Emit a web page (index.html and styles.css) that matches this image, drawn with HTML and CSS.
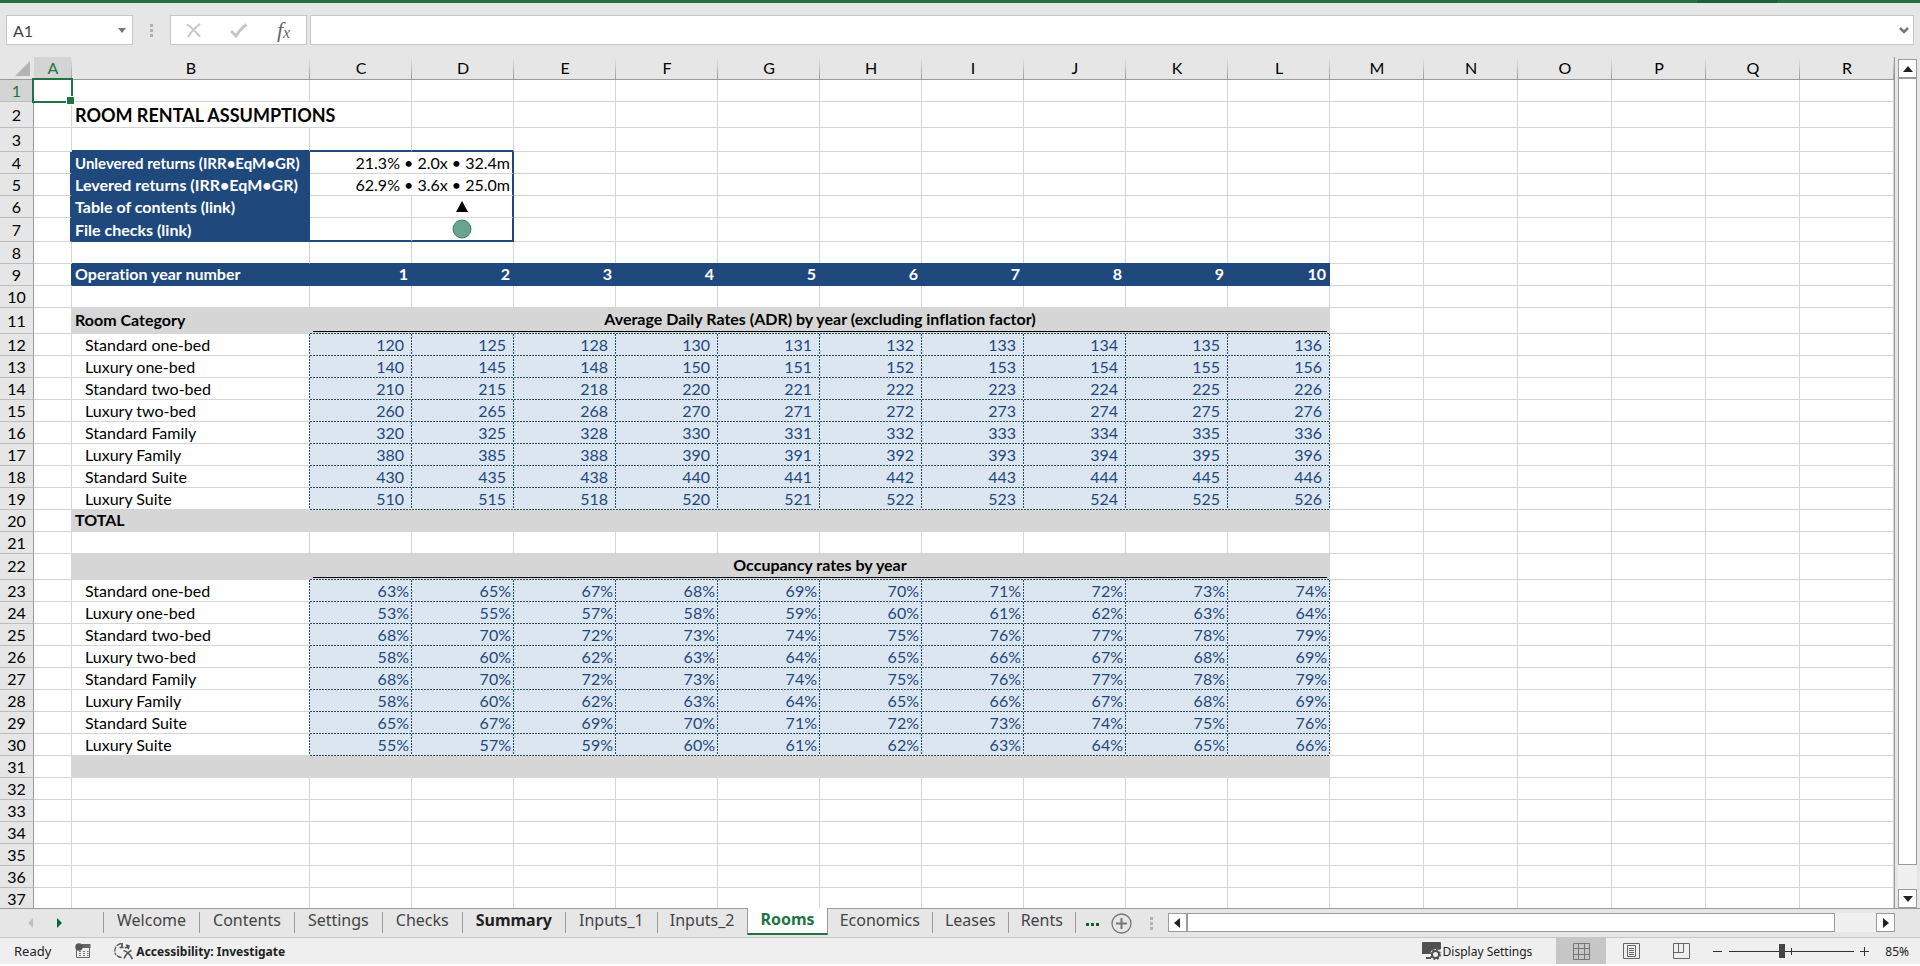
FILE: index.html
```html
<!DOCTYPE html>
<html lang="en">
<head>
<meta charset="utf-8">
<title>Rooms</title>
<link rel="stylesheet" href="styles.css">
</head>
<body>
<div class="ribbon-edge"><span class="ribbon-shade"></span></div>
<header class="formula-bar">
  <div class="name-box">
    <input class="name-input" type="text" value="A1" aria-label="Name box">
    <button class="name-drop" aria-label="Open name list"><svg width="8" height="5" viewBox="0 0 8 5"><path d="M0 0h8L4 5z" fill="#777"/></svg></button>
  </div>
  <svg class="grip" width="3" height="13" viewBox="0 0 3 13"><path d="M0 0h3v3H0zM0 5h3v3H0zM0 10h3v3H0z" fill="#b0b0b0"/></svg>
  <div class="fx-buttons">
    <button class="fx-button" aria-label="Cancel"><svg width="16" height="15" viewBox="0 0 16 15"><path d="M1 1.5Q6 4.5 14 13.5M14 1Q7 6 2 14" fill="none" stroke="#c6c6c6" stroke-width="2"/></svg></button>
    <button class="fx-button" aria-label="Enter"><svg width="18" height="15" viewBox="0 0 18 15"><path d="M1 8l5 5Q11 5 16.500 1.500" fill="none" stroke="#c6c6c6" stroke-width="3"/></svg></button>
    <button class="fx-button fx" aria-label="Insert function"><i>f</i><i class="fx-x">x</i></button>
  </div>
  <div class="formula-box">
    <input class="formula-input" type="text" value="" aria-label="Formula">
    <button class="expand" aria-label="Expand formula bar"><svg width="10" height="7" viewBox="0 0 10 7"><path d="M1 1l4 4 4-4" fill="none" stroke="#777" stroke-width="2.500"/></svg></button>
  </div>
</header>

<main class="sheet-area">
<div class="sheet">
<table class="grid">
<colgroup><col class="w-num"><col class="w-a"><col class="w-b"><col class="w-year" span="10"><col class="w-rest" span="6"></colgroup>
<thead>
<tr><th class="corner"><svg width="15" height="15" viewBox="0 0 15 15"><path d="M15 0v15H0z" fill="#b4b4b4"/></svg><th class="on">A<th>B<th>C<th>D<th>E<th>F<th>G<th>H<th>I<th>J<th>K<th>L<th>M<th>N<th>O<th>P<th>Q<th>R</tr>
</thead>
<tbody>
<tr><th class="on">1<td class="active"><span class="cursor"></span><td><td class="years" colspan="10"><td class="rest" colspan="6"></tr>
<tr class="tall"><th>2<td><td class="title" colspan="2">ROOM RENTAL ASSUMPTIONS<td class="years" colspan="9"><td class="rest" colspan="6"></tr>
<tr class="mid"><th>3<td><td class="box-top"><td class="box-top"><td class="box-top"><td class="years" colspan="8"><td class="rest" colspan="6"></tr>
<tr><th>4<td class="box-left"><td class="navy shrink">Unlevered returns (IRR•EqM•GR)<td class="box-right num" colspan="2">21.3% • 2.0x • 32.4m<td class="years" colspan="8"><td class="rest" colspan="6"></tr>
<tr><th>5<td class="box-left"><td class="navy">Levered returns (IRR•EqM•GR)<td class="box-right num" colspan="2">62.9% • 3.6x • 25.0m<td class="years" colspan="8"><td class="rest" colspan="6"></tr>
<tr><th>6<td class="box-left"><td class="navy">Table of contents (link)<td><td class="box-right mark"><svg width="12" height="11" viewBox="0 0 12 11"><path d="M6 0l6 11H0z" fill="#000"/></svg><td class="years" colspan="8"><td class="rest" colspan="6"></tr>
<tr class="mid"><th>7<td class="box-left"><td class="navy">File checks (link)<td class="box-bottom"><td class="box-right box-bottom mark"><svg width="20" height="20" viewBox="0 0 20 20"><circle cx="10" cy="10" r="9" fill="#68a490" stroke="#3f7a66"/></svg><td class="years" colspan="8"><td class="rest" colspan="6"></tr>
<tr><th>8<td><td class="band-top"><td class="years band-top" colspan="10"><td class="rest" colspan="6"></tr>
<tr class="year-row"><th>9<td class="edge"><td class="navy">Operation year number<td class="navy num">1<td class="navy num">2<td class="navy num">3<td class="navy num">4<td class="navy num">5<td class="navy num">6<td class="navy num">7<td class="navy num">8<td class="navy num">9<td class="navy num">10<td class="rest" colspan="6"></tr>
<tr><th>10<td><td><td class="years" colspan="10"><td class="rest" colspan="6"></tr>
<tr class="tall"><th>11<td><td class="grey">Room Category<td class="grey group" colspan="10"><span class="group-name">Average Daily Rates (ADR) by year (excluding inflation factor)</span><td class="rest" colspan="6"></tr>
</tbody>
<tbody class="inputs rates">
<tr><th>12<td><td>Standard one-bed<td>120<td>125<td>128<td>130<td>131<td>132<td>133<td>134<td>135<td>136<td class="rest" colspan="6"></tr>
<tr><th>13<td><td>Luxury one-bed<td>140<td>145<td>148<td>150<td>151<td>152<td>153<td>154<td>155<td>156<td class="rest" colspan="6"></tr>
<tr><th>14<td><td>Standard two-bed<td>210<td>215<td>218<td>220<td>221<td>222<td>223<td>224<td>225<td>226<td class="rest" colspan="6"></tr>
<tr><th>15<td><td>Luxury two-bed<td>260<td>265<td>268<td>270<td>271<td>272<td>273<td>274<td>275<td>276<td class="rest" colspan="6"></tr>
<tr><th>16<td><td>Standard Family<td>320<td>325<td>328<td>330<td>331<td>332<td>333<td>334<td>335<td>336<td class="rest" colspan="6"></tr>
<tr><th>17<td><td>Luxury Family<td>380<td>385<td>388<td>390<td>391<td>392<td>393<td>394<td>395<td>396<td class="rest" colspan="6"></tr>
<tr><th>18<td><td>Standard Suite<td>430<td>435<td>438<td>440<td>441<td>442<td>443<td>444<td>445<td>446<td class="rest" colspan="6"></tr>
<tr><th>19<td><td>Luxury Suite<td>510<td>515<td>518<td>520<td>521<td>522<td>523<td>524<td>525<td>526<td class="rest" colspan="6"></tr>
</tbody>
<tbody>
<tr><th>20<td><td class="grey" colspan="11">TOTAL<td class="rest" colspan="6"></tr>
<tr><th>21<td><td><td class="years" colspan="10"><td class="rest" colspan="6"></tr>
<tr class="tall"><th class="raised">22<td><td class="grey"><td class="grey group" colspan="10"><span class="group-name">Occupancy rates by year</span><td class="rest" colspan="6"></tr>
</tbody>
<tbody class="inputs">
<tr><th>23<td><td>Standard one-bed<td>63%<td>65%<td>67%<td>68%<td>69%<td>70%<td>71%<td>72%<td>73%<td>74%<td class="rest" colspan="6"></tr>
<tr><th>24<td><td>Luxury one-bed<td>53%<td>55%<td>57%<td>58%<td>59%<td>60%<td>61%<td>62%<td>63%<td>64%<td class="rest" colspan="6"></tr>
<tr><th>25<td><td>Standard two-bed<td>68%<td>70%<td>72%<td>73%<td>74%<td>75%<td>76%<td>77%<td>78%<td>79%<td class="rest" colspan="6"></tr>
<tr><th>26<td><td>Luxury two-bed<td>58%<td>60%<td>62%<td>63%<td>64%<td>65%<td>66%<td>67%<td>68%<td>69%<td class="rest" colspan="6"></tr>
<tr><th>27<td><td>Standard Family<td>68%<td>70%<td>72%<td>73%<td>74%<td>75%<td>76%<td>77%<td>78%<td>79%<td class="rest" colspan="6"></tr>
<tr><th>28<td><td>Luxury Family<td>58%<td>60%<td>62%<td>63%<td>64%<td>65%<td>66%<td>67%<td>68%<td>69%<td class="rest" colspan="6"></tr>
<tr><th>29<td><td>Standard Suite<td>65%<td>67%<td>69%<td>70%<td>71%<td>72%<td>73%<td>74%<td>75%<td>76%<td class="rest" colspan="6"></tr>
<tr><th>30<td><td>Luxury Suite<td>55%<td>57%<td>59%<td>60%<td>61%<td>62%<td>63%<td>64%<td>65%<td>66%<td class="rest" colspan="6"></tr>
</tbody>
<tbody>
<tr><th>31<td><td class="grey" colspan="11"><td class="rest" colspan="6"></tr>
<tr><th>32<td><td><td class="years" colspan="10"><td class="rest" colspan="6"></tr>
<tr><th>33<td><td><td class="years" colspan="10"><td class="rest" colspan="6"></tr>
<tr><th>34<td><td><td class="years" colspan="10"><td class="rest" colspan="6"></tr>
<tr><th>35<td><td><td class="years" colspan="10"><td class="rest" colspan="6"></tr>
<tr><th>36<td><td><td class="years" colspan="10"><td class="rest" colspan="6"></tr>
<tr><th>37<td><td><td class="years" colspan="10"><td class="rest" colspan="6"></tr>
</tbody>
</table>
</div>
<div class="v-scroll">
  <button class="scroll-button" aria-label="Scroll up"><svg width="10" height="6" viewBox="0 0 10 6"><path d="M5 0l5 6H0z" fill="#222"/></svg></button>
  <div class="v-track"><div class="v-thumb"></div></div>
  <button class="scroll-button" aria-label="Scroll down"><svg width="10" height="6" viewBox="0 0 10 6"><path d="M0 0h10L5 6z" fill="#222"/></svg></button>
</div>
</main>

<nav class="tab-bar" aria-label="Sheets">
  <div class="tab-arrows">
    <button class="bare" aria-label="Previous sheets"><svg width="5" height="10" viewBox="0 0 5 10"><path d="M5 0v10L0 5z" fill="#c0c0c0"/></svg></button>
    <button class="bare" aria-label="Next sheets"><svg width="5" height="10" viewBox="0 0 5 10"><path d="M0 0v10l5-5z" fill="#0a6332"/></svg></button>
  </div>
  <button class="tab">Welcome</button>
  <button class="tab">Contents</button>
  <button class="tab">Settings</button>
  <button class="tab">Checks</button>
  <button class="tab strong">Summary</button>
  <button class="tab">Inputs_1</button>
  <button class="tab before-current">Inputs_2</button>
  <button class="tab current">Rooms</button>
  <button class="tab">Economics</button>
  <button class="tab">Leases</button>
  <button class="tab">Rents</button>
  <button class="bare more" aria-label="More sheets"><svg width="13" height="3" viewBox="0 0 13 3"><path d="M0 0h3v3H0zM5 0h3v3H5zM10 0h3v3h-3z" fill="#0a6332"/></svg></button>
  <button class="bare add" aria-label="New sheet"><svg width="21" height="21" viewBox="0 0 21 21"><circle cx="10.500" cy="10.500" r="9.500" fill="none" stroke="#777" stroke-width="1.300"/><path d="M10.500 5v11M5 10.500h11" stroke="#777" stroke-width="2"/></svg></button>
  <svg class="tab-grip" width="3" height="13" viewBox="0 0 3 13"><path d="M0 0h3v3H0zM0 5h3v3H0zM0 10h3v3H0z" fill="#b0b0b0"/></svg>
  <div class="h-scroll">
    <button class="scroll-button" aria-label="Scroll left"><svg width="6" height="10" viewBox="0 0 6 10"><path d="M6 0v10L0 5z" fill="#222"/></svg></button>
    <div class="h-track"><div class="h-thumb"></div></div>
    <button class="scroll-button" aria-label="Scroll right"><svg width="6" height="10" viewBox="0 0 6 10"><path d="M0 0v10l6-5z" fill="#222"/></svg></button>
  </div>
</nav>

<footer class="status-bar">
  <span class="ready">Ready</span>
  <button class="bare macro" aria-label="Record macro"><svg width="16" height="16" viewBox="0 0 16 16"><path d="M7 1h8.500v4H7z" fill="#666"/><path d="M1.500 6v8.500h13V4" fill="none" stroke="#666"/><circle cx="4" cy="4" r="3.700" fill="#555"/><path d="M4 8.500h2m2 0h2m2 0h1.500M4 10.500h2m2 0h2m2 0h1.500M4 12.500h2m2 0h2m2 0h1.500" stroke="#777"/></svg></button>
  <button class="bare access"><svg width="19" height="18" viewBox="0 0 19 18"><path d="M7 1.500A7.500 7.500 0 0 0 2 13M3 13.500Q5 15.500 7.500 15.500" fill="none" stroke="#555" stroke-width="1.300" stroke-dasharray="5 1"/><path d="M8 1v5M5.500 5.500h4M11 6l4-2M12 3l3 1-1 3M9.500 8.500q5 1 9 8.500M17.500 8.500Q13 10 10 16.500" fill="none" stroke="#555" stroke-width="1.700"/></svg>Accessibility: Investigate</button>
  <button class="bare display"><svg width="20" height="18" viewBox="0 0 20 18"><path d="M1 0h17q1 0 1 1v6L9 12H0V1q0-1 1-1zM4 15h5v2H4z" fill="#505050"/><circle cx="13.500" cy="12.500" r="5.500" fill="#efefef"/><circle cx="13.500" cy="12.500" r="3.500" fill="none" stroke="#505050" stroke-width="2"/><circle cx="13.500" cy="12.500" r="4.700" fill="none" stroke="#505050" stroke-width="1.600" stroke-dasharray="1.900 1.790"/></svg>Display Settings</button>
  <button class="view chosen" aria-label="Normal view"><svg width="17" height="17" viewBox="0 0 17 17"><path d="M.5.5h16v16H.5zM5.500.5v16M11.500.5v16M.5 5.500h16M.5 11.500h16" fill="none" stroke="#777"/></svg></button>
  <button class="view" aria-label="Page layout view"><svg width="17" height="16" viewBox="0 0 17 16"><path d="M.5.500h16v15H.5zM4.500 2.500h8v11h-8zM6 5.500h5M6 7.500h5M6 9.500h5M6 11.500h5" fill="none" stroke="#666"/></svg></button>
  <button class="view" aria-label="Page break view"><svg width="17" height="16" viewBox="0 0 17 16"><path d="M.5.500h16v15H.5zM5.500.5v9M.5 9.500h10V.5" fill="none" stroke="#666"/></svg></button>
  <button class="bare zoom-out" aria-label="Zoom out"><svg width="9" height="9" viewBox="0 0 9 9"><path d="M0 4.500h9" stroke="#333"/></svg></button>
  <input class="zoom" type="range" min="0" max="100" value="42" aria-label="Zoom">
  <button class="bare zoom-in" aria-label="Zoom in"><svg width="9" height="9" viewBox="0 0 9 9"><path d="M0 4.500h9M4.500 0v9" stroke="#333"/></svg></button>
  <span class="percent">85%</span>
</footer>
</body>
</html>
```
FILE: styles.css
```css
* { box-sizing: border-box; }

:root {
  --green: #217346;
  --navy: #1f497d;
  --chrome: #e6e6e6;
  --line: #d4d4d4;
  --edge: #9b9b9b;
  --dots-across: repeating-linear-gradient(90deg, var(--navy) 0 2px, #fff 2px 3px);
  --dots-down: repeating-linear-gradient(var(--navy) 0 2px, #fff 2px 3px);
}

body {
  margin: 0;
  height: 100vh;
  display: flex;
  flex-direction: column;
  overflow: hidden;
  background: var(--chrome);
  font-family: "Noto Sans", "Open Sans", sans-serif;
  color: #222;
}

button, input { font: inherit; color: inherit; margin: 0; }
button { border: 0; padding: 0; background: none; display: flex; align-items: center; justify-content: center; }
svg { display: block; flex: none; }

.ribbon-edge { height: 3px; flex: none; display: flex; justify-content: flex-end; background: var(--green); }
.ribbon-shade { width: 80px; margin-right: 143px; background: #1e5f3c; }

/* Formula bar */
.formula-bar { display: flex; align-items: center; padding: 12px 6px; flex: none; font-family: Lato, sans-serif; font-size: 16px; }
.name-box, .fx-buttons, .formula-box { height: 30px; display: flex; align-items: center; background: #fff; border: 1px solid #c6c6c6; }
.name-box { width: 127px; }
.name-input { width: 100px; flex: 1; border: 0; padding: 0 6px; background: none; color: #444; }
.name-drop { width: 20px; height: 28px; }
.grip { margin: 0 17px; }
.fx-buttons { width: 137px; margin-right: 3px; }
.fx-button { flex: 1; height: 28px; }
.fx { font: italic 22px "Liberation Serif", serif; color: #666; }
.fx-x { font-size: 16px; padding-top: 5px; }
.formula-box { flex: 1; }
.formula-input { flex: 1; border: 0; padding: 0 6px; background: none; }
.expand { width: 18px; height: 28px; }

/* Worksheet */
.sheet-area { flex: 1; min-height: 0; display: flex; }
.sheet { flex: 1; overflow: hidden; }
.grid {
  table-layout: fixed;
  width: 1894px;
  border-spacing: 0;
  font: 16px/20px Lato, sans-serif;
  font-variant-ligatures: none;
  color: #000;
  border-right: 1px solid var(--edge);
}
.w-num { width: 34px; }
.w-a { width: 38px; }
.w-b { width: 238px; }
.w-year { width: 102px; }
.w-rest { width: 94px; }

.grid td { height: 22px; padding: 0 3px; background-color: #fff; border-right: 1px solid var(--line); border-bottom: 1px solid var(--line); white-space: nowrap; overflow: hidden; }
.grid th { height: 22px; padding: 1px 0 0; font-weight: 400; background: var(--chrome); border-right: 1px solid var(--edge); border-bottom: 1px solid #bdbdbd; }
.grid thead th { height: 23px; padding: 0 0 1px; border-right: 0; border-bottom-color: var(--edge); background: linear-gradient(var(--chrome), var(--edge)) right / 1px 100% no-repeat var(--chrome); }
.grid thead .corner { background-image: none; padding: 0 3px 0 15px; }
.grid th.on, .grid thead th.on { color: var(--green); background-color: #d4d4d4; }
.grid .tall td, .grid .tall th { height: 26px; }
.grid .mid td, .grid .mid th { height: 24px; }
.grid .tall .raised { padding: 0 0 2px; }

.grid .years, .grid .rest { padding: 0; border-right: 0; }
.years { background: repeating-linear-gradient(90deg, transparent 0 101px, var(--line) 101px 102px); }
.rest { background: repeating-linear-gradient(90deg, transparent 0 93px, var(--line) 93px 94px); }

.grid .active { position: relative; overflow: visible; }
.cursor { position: absolute; inset: -2px; z-index: 1; border: 2px solid var(--green); }
.cursor::after { content: ""; position: absolute; right: -4px; bottom: -4px; width: 7px; height: 7px; border: 1px solid #fff; background: var(--green); }

.grid .title { font-size: 18px; font-weight: 700; line-height: 24px; }
.grid .navy { background: var(--navy); border-color: var(--navy); color: #fff; font-weight: 700; }
.grid .shrink { font-size: 15px; }
.grid .num { text-align: right; padding: 0 2px; }
.grid .year-row .navy { padding: 0 3px 1px; }
.grid .box-top { border-bottom: 2px solid var(--navy); }
.grid .box-bottom { border-bottom: 2px solid var(--navy); }
.grid .box-left { border-right: 2px solid var(--navy); }
.grid .box-right { border-right: 2px solid var(--navy); }
.grid .band-top { border-bottom-color: var(--navy); }
.grid .edge { border-right-color: var(--navy); }
.grid .mark { padding: 0; }
.mark svg { margin: 0 auto; }
.grid .grey { background: #d6d6d6; border-color: #d6d6d6; font-weight: 700; padding-bottom: 1px; }
.grid .group { padding: 0 3px; border: 0; vertical-align: top; text-align: center; background: var(--dots-across) 0 100% / 100% 1px no-repeat #d6d6d6; }
.group-name { display: block; height: 24px; line-height: 22px; border-bottom: 1px solid #000; }

.inputs td:nth-child(3) { padding-left: 13px; border-right: 0; background: var(--dots-down) 100% 0 / 1px 100% no-repeat #fff; }
.inputs td:nth-child(n+4):not(.rest) {
  padding: 0 3px 1px;
  border: 0;
  text-align: right;
  color: var(--navy);
  background: var(--dots-across) 0 100% / 100% 1px no-repeat, var(--dots-down) 100% 0 / 1px 100% no-repeat, #dce6f1;
}
.rates td:nth-child(n+4):not(.rest) { padding-right: 8px; }

/* Scroll bars */
.scroll-button { width: 19px; height: 19px; flex: none; background: #fff; border: 1px solid var(--edge); }
.v-scroll { width: 19px; margin: 2px 3px 0 0; flex: none; display: flex; flex-direction: column; }
.v-track { flex: 1; background: #f0f0f0; }
.v-thumb { height: 97%; background: #fff; border: 1px solid var(--edge); }

/* Sheet tabs */
.tab-bar { height: 29px; flex: none; display: flex; align-items: flex-start; font-size: 16px; line-height: 20px; color: #444; padding-right: 25px; border-top: 1px solid var(--edge); }
.tab-arrows { width: 104px; height: 28px; display: flex; align-items: center; gap: 24px; padding-left: 28px; position: relative; }
.tab-arrows::after { content: ""; position: absolute; right: 0; top: 3px; width: 1px; height: 21px; background: var(--edge); }
.bare { flex: none; }
.tab { flex: none; height: 21px; margin-top: 3px; padding: 0 13px 6px; border-right: 1px solid var(--edge); }
.current ~ .tab { padding: 0 12px 6px; }
.strong { font-weight: 700; color: #222; }
.before-current { border-right-color: transparent; padding: 0 12px 6px; }
.current { height: 27px; margin-top: -1px; padding: 0 12px 4px; border: solid var(--edge); border-width: 0 1px; border-bottom: 2px solid var(--green); background: #fff; color: var(--green); font-weight: 700; }
.more { height: 28px; margin-left: 10px; padding-top: 3px; }
.add { height: 28px; margin-left: 12px; }
.tab-grip { margin: 8px 15px 0 18px; }
.h-scroll { flex: 1; display: flex; margin-top: 4px; }
.h-track { flex: 1; background: #f0f0f0; }
.h-thumb { width: 94%; height: 19px; background: #fff; border: 1px solid var(--edge); }

/* Status bar */
.status-bar { height: 27px; flex: none; display: flex; align-items: center; margin-bottom: 2px; padding: 0 11px 0 14px; background: #efefef; border-top: 1px solid #c6c6c6; font-size: 12px; box-shadow: 0 2px #fff; }
.ready { font-size: 13px; }
.macro { margin-left: 24px; }
.access { margin-left: 23px; gap: 3px; font-weight: 700; }
.display { margin-left: auto; margin-right: 24px; gap: 1px; }
.view { width: 50px; height: 100%; flex: none; }
.chosen { background: #c6c6c6; }
.zoom-out { margin-left: 7px; }
.zoom { width: 125px; height: 14px; margin: 0 6px 0 7px; appearance: none; background: linear-gradient(#333, #333) 62px 50% / 1px 7px no-repeat, linear-gradient(#333, #333) 0 50% / 100% 1px no-repeat; }
.zoom::-webkit-slider-thumb { appearance: none; width: 6px; height: 14px; background: #444; }
.percent { margin-left: 16px; }
```
